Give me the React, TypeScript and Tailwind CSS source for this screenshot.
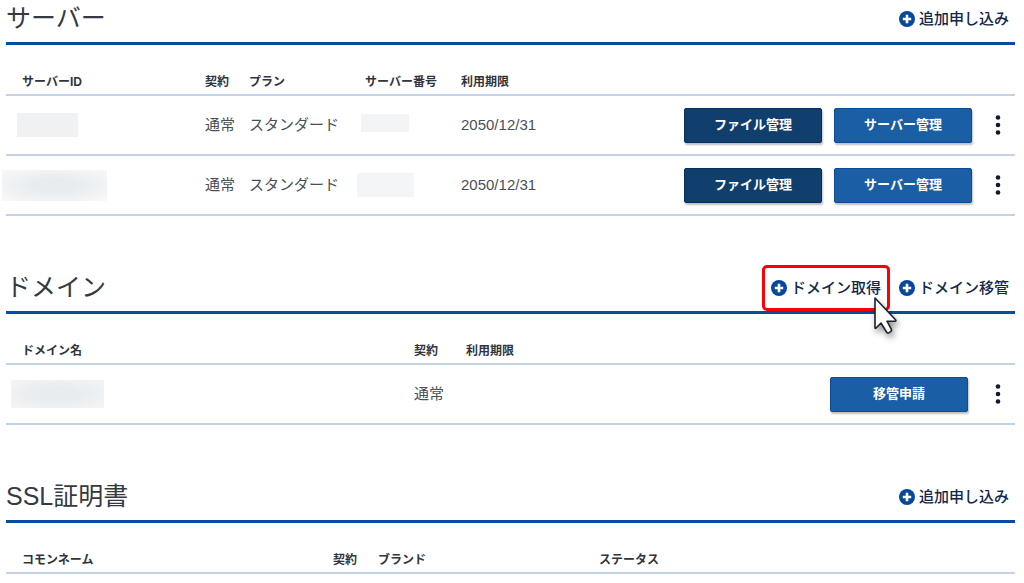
import type { ReactNode } from "react";

const style = {
	th: "h-[51px] border-b-2 border-[#c3d2e4] pt-6 pl-4 text-left text-xs leading-4 font-bold whitespace-nowrap",
	td: "h-[60px] border-b-2 border-[#c3d2e4] pl-4 text-[15px] leading-6 text-[#4a4f57] whitespace-nowrap",
	table: "w-full table-fixed border-separate border-spacing-0",
	button:
		"h-[35px] w-[138px] rounded-xs border text-[13px] font-bold text-white shadow-[1px_2px_2px_rgba(0,0,0,0.25)]",
	blue: "border-[#0c4d97] bg-[#1a5ea5]",
	navy: "border-[#08305f] bg-[#103f6e]",
} as const;

type Server = {
	readonly plan: string;
	readonly limit: string;
	readonly idMask: string;
	readonly numberMask: string;
};

const servers: Server[] = [
	{
		plan: "スタンダード",
		limit: "2050/12/31",
		idMask: "-ml-[5px] h-6 w-[61px] bg-[#eff1f3]",
		numberMask: "-ml-1 mb-1 h-[18px] w-12 bg-[#f3f4f6]",
	},
	{
		plan: "スタンダード",
		limit: "2050/12/31",
		idMask:
			"-ml-5 h-[31px] w-[105px] bg-radial from-[#e8ecef] from-30% to-[#f8f9fa]",
		numberMask: "-ml-2 h-6 w-[57px] bg-[#f4f5f6]",
	},
];

function PlusIcon() {
	return (
		<svg className="size-4 shrink-0" viewBox="0 0 16 16" aria-hidden="true">
			<circle cx="8" cy="8" r="8" fill="#08489a" />
			<path d="M8 3.800v8.400M3.800 8h8.400" stroke="#fff" strokeWidth="2.600" />
		</svg>
	);
}

function Cursor() {
	return (
		<svg
			className="absolute top-[20px] left-[102px] h-12 w-9 drop-shadow-[2px_4px_3px_rgba(0,0,0,0.4)]"
			viewBox="0 0 36 48"
			aria-hidden="true"
		>
			<path
				d="M2 2v29.500q0 1.500 1 .5l5-5 5.500 9q1 1.500 2.500 .7l1.500-1q1.500-1 .8-2.500l-4.300-8h8q1.500-.3 .5-1.500z"
				fill="#fff"
				stroke="#1c2232"
				strokeWidth="1.600"
				strokeLinejoin="round"
			/>
		</svg>
	);
}

function ActionLink({
	label,
	marked = false,
}: {
	label: string;
	marked?: boolean;
}) {
	return (
		<a
			href="#"
			className="relative flex items-center gap-1 text-[15px] leading-6 font-medium text-[#12284c]"
		>
			<PlusIcon />
			{label}
			{marked && (
				<>
					<span className="absolute -inset-x-[9px] -inset-y-[11px] rounded-[5px] border-3 border-[#fb0007]" />
					<Cursor />
				</>
			)}
		</a>
	);
}

function Section({
	title,
	links,
	children,
}: {
	title: string;
	links: ReactNode;
	children: ReactNode;
}) {
	return (
		<section>
			<div className="flex h-[45px] items-start justify-between border-b-3 border-[#084c9c] pr-1.5">
				<h2 className="text-[25px] leading-9 text-[#353a42]">{title}</h2>
				<div className="relative z-10 flex gap-[18px] pt-[7px]">{links}</div>
			</div>
			{children}
		</section>
	);
}

function Menu() {
	return (
		<button type="button" aria-label="メニュー" className="px-2">
			<svg className="h-6 w-2" viewBox="0 0 8 24" fill="#121a2a">
				<circle cx="4" cy="4.500" r="2.300" />
				<circle cx="4" cy="12" r="2.300" />
				<circle cx="4" cy="19.500" r="2.300" />
			</svg>
		</button>
	);
}

function Mask({ className }: { className: string }) {
	return <span className={`block ${className}`} />;
}

export default function App() {
	return (
		<main
			lang="ja"
			className="flex flex-col gap-[53px] bg-white pr-[9px] pl-1.5 font-['Liberation_Sans','Noto_Sans_CJK_JP',sans-serif] text-[#30353d]"
		>
			<Section title="サーバー" links={<ActionLink label="追加申し込み" />}>
				<table className={style.table}>
					<thead>
						<tr>
							<th className={`${style.th} w-[183px]`}>サーバーID</th>
							<th className={`${style.th} w-11`}>契約</th>
							<th className={`${style.th} w-[116px]`}>プラン</th>
							<th className={`${style.th} w-24`}>サーバー番号</th>
							<th className={`${style.th} w-32`}>利用期限</th>
							<th className={style.th} />
						</tr>
					</thead>
					<tbody>
						{servers.map((item: Server, index: number) => (
							<tr key={index}>
								<td className={style.td}>
									<Mask className={item.idMask} />
								</td>
								<td className={style.td}>通常</td>
								<td className={style.td}>{item.plan}</td>
								<td className={style.td}>
									<Mask className={item.numberMask} />
								</td>
								<td className={style.td}>{item.limit}</td>
								<td className={style.td}>
									<div className="flex items-center justify-end pr-[5px]">
										<button
											type="button"
											className={`${style.button} ${style.navy}`}
										>
											ファイル管理
										</button>
										<button
											type="button"
											className={`${style.button} ${style.blue} mr-3.5 ml-3`}
										>
											サーバー管理
										</button>
										<Menu />
									</div>
								</td>
							</tr>
						))}
					</tbody>
				</table>
			</Section>

			<Section
				title="ドメイン"
				links={
					<>
						<ActionLink label="ドメイン取得" marked />
						<ActionLink label="ドメイン移管" />
					</>
				}
			>
				<table className={style.table}>
					<thead>
						<tr>
							<th className={`${style.th} w-[392px]`}>ドメイン名</th>
							<th className={`${style.th} w-[52px]`}>契約</th>
							<th className={`${style.th} w-32`}>利用期限</th>
							<th className={style.th} />
						</tr>
					</thead>
					<tbody>
						<tr>
							<td className={style.td}>
								<Mask className="-ml-[11px] h-7 w-[93px] bg-radial from-[#e8ecef] from-30% to-[#f4f5f6]" />
							</td>
							<td className={style.td}>通常</td>
							<td className={style.td} />
							<td className={style.td}>
								<div className="flex items-center justify-end pr-[5px]">
									<button
										type="button"
										className={`${style.button} ${style.blue} mr-[18px]`}
									>
										移管申請
									</button>
									<Menu />
								</div>
							</td>
						</tr>
					</tbody>
				</table>
			</Section>

			<Section title="SSL証明書" links={<ActionLink label="追加申し込み" />}>
				<table className={style.table}>
					<thead>
						<tr>
							<th className={`${style.th} w-[311px]`}>コモンネーム</th>
							<th className={`${style.th} w-[45px]`}>契約</th>
							<th className={`${style.th} w-[221px]`}>ブランド</th>
							<th className={style.th}>ステータス</th>
						</tr>
					</thead>
				</table>
			</Section>
		</main>
	);
}
